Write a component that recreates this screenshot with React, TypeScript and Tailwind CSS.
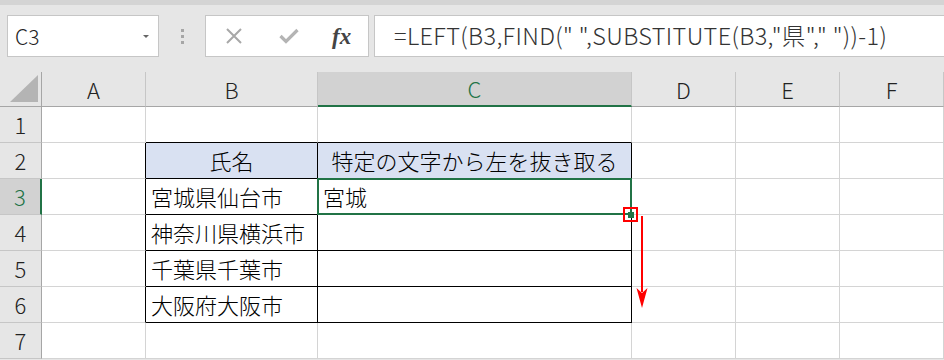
import React from 'react'

// Excel-ish sheet: formula bar on top, then a grid of 42px row headers + 6 columns.
const cols: { id: string; w: string }[] = [
  { id: 'A', w: '104px' },
  { id: 'B', w: '172px' },
  { id: 'C', w: '314px' },
  { id: 'D', w: '104px' },
  { id: 'E', w: '104px' },
  { id: 'F', w: '104px' },
]

const rows = [1, 2, 3, 4, 5, 6, 7]

const data: Record<string, { text: string; center?: boolean }> = {
  B2: { text: '氏名', center: true },
  C2: { text: '特定の文字から左を抜き取る', center: true },
  B3: { text: '宮城県仙台市' },
  B4: { text: '神奈川県横浜市' },
  B5: { text: '千葉県千葉市' },
  B6: { text: '大阪府大阪市' },
  C3: { text: '宮城' },
}

const inTable = (c: string, r: number) => (c === 'B' || c === 'C') && r >= 2 && r <= 6

function cellBorder(c: string, r: number) {
  if (inTable(c, r)) return 'border-r border-b border-r-black border-b-black'
  if (c === 'A' && r >= 2 && r <= 6) return 'border-r border-b border-r-black border-b-[#d4d4d4]'
  if ((c === 'B' || c === 'C') && r === 1) return 'border-r border-b border-r-[#d4d4d4] border-b-black'
  return 'border-r border-b border-[#d4d4d4]'
}

function FormulaBar() {
  return (
    <div className="flex items-start h-[42px] mt-[10px] pl-[7px]">
      {/* name box */}
      <div className="w-[152px] h-[42px] bg-white border border-[#c6c6c6] flex items-center justify-between pl-[7px] pr-[9px]">
        <span className="text-[21px] font-light text-[#222] leading-none">C3</span>
        <span className="w-0 h-0 border-l-[3px] border-r-[3px] border-t-[3px] border-l-transparent border-r-transparent border-t-[#666]" />
      </div>
      {/* grip dots */}
      <div className="w-[46px] h-[42px] flex flex-col items-center justify-center gap-[3px]">
        <span className="w-[3px] h-[3px] bg-[#a6a6a6]" />
        <span className="w-[3px] h-[3px] bg-[#a6a6a6]" />
        <span className="w-[3px] h-[3px] bg-[#a6a6a6]" />
      </div>
      {/* cancel / enter / fx */}
      <div className="w-[164px] h-[42px] bg-white border border-[#c6c6c6] flex items-center">
        <svg width="18" height="18" viewBox="0 0 18 18" className="ml-[19px]">
          <path d="M2 2 L16 16 M16 2 L2 16" stroke="#a8a8a8" strokeWidth="2" fill="none" />
        </svg>
        <svg width="20" height="16" viewBox="0 0 20 16" className="ml-[36px]">
          <path d="M1.5 8 L7 13.5 L18.5 2" stroke="#b4b4b4" strokeWidth="3.2" fill="none" />
        </svg>
        <span className="ml-[33px] font-['Liberation_Serif',serif] italic font-bold text-[23px] text-[#444] leading-none">fx</span>
      </div>
      {/* formula */}
      <div className="flex-1 ml-[5px] h-[42px] bg-white border border-r-0 border-[#c6c6c6] flex items-center pl-[19px]">
        <span className="text-[23.5px] font-light text-[#333] leading-none whitespace-nowrap tracking-[0.35px]">
          =LEFT(B3,FIND(" ",SUBSTITUTE(B3,"県"," "))-1)
        </span>
      </div>
    </div>
  )
}

function Sheet() {
  return (
    <div className="relative mt-[15px] grid grid-cols-[42px_104px_172px_314px_104px_104px_104px] grid-rows-[35px_repeat(7,36px)] bg-white font-light">
      {/* corner */}
      <div className="bg-[#e6e6e6] border-r border-b border-[#a6a6a6] flex items-end justify-end pr-[3px] pb-[4px]">
        <span className="w-[28px] h-[27px] bg-[#b4b4b4] [clip-path:polygon(100%_0,100%_100%,0_100%)]" />
      </div>
      {cols.map(({ id }) =>
        id === 'C' ? (
          <div key={id} className="bg-[#d2d2d2] border-b-2 border-b-[#217346] border-r border-r-[#c6c6c6] flex items-center justify-center text-[22px] text-[#217346]">
            {id}
          </div>
        ) : (
          <div key={id} className="bg-[#e6e6e6] border-b border-b-[#a6a6a6] border-r border-r-[#c6c6c6] flex items-center justify-center text-[22px] text-[#222]">
            {id}
          </div>
        )
      )}
      {rows.map((r) => (
        <React.Fragment key={r}>
          {r === 3 ? (
            <div className="bg-[#d2d2d2] border-r-2 border-r-[#217346] border-b border-b-[#c6c6c6] flex items-center justify-center text-[22px] text-[#217346]">
              {r}
            </div>
          ) : (
            <div className="bg-[#e6e6e6] border-r border-r-[#a6a6a6] border-b border-b-[#c6c6c6] flex items-center justify-center text-[22px] text-[#222]">
              {r}
            </div>
          )}
          {cols.map(({ id }) => {
            const key = `${id}${r}`
            const d = data[key]
            const head = r === 2 && inTable(id, r)
            return (
              <div
                key={key}
                className={`relative flex items-center text-[22px] text-black whitespace-nowrap ${cellBorder(id, r)} ${head ? 'bg-[#d9e1f2]' : ''} ${d?.center ? 'justify-center' : 'pl-[5px]'}`}
              >
                {d?.text}
                {key === 'C3' && <div className="absolute -top-px -left-px -right-px -bottom-px border-2 border-[#217346]" />}
              </div>
            )
          })}
        </React.Fragment>
      ))}

      {/* fill handle, highlighted in red */}
      <div className="absolute left-[623px] top-[135px] w-[15px] h-[15px] border-2 border-[#ff0000] flex items-center justify-center">
        <span className="w-[6px] h-[6px] bg-[#217346]" />
      </div>
      {/* drag arrow */}
      <svg className="absolute left-[636px] top-[144px]" width="13" height="94" viewBox="0 0 13 94">
        <path d="M6 0 V76" stroke="#ff0000" strokeWidth="2" />
        <polygon points="0.5,72 6,77 11.5,72 6,92" fill="#ff0000" />
      </svg>
    </div>
  )
}

export default function App() {
  return (
    <div className="w-[944px] h-[360px] overflow-hidden bg-[#e6e6e6] font-['Noto_Sans_CJK_JP',sans-serif]">
      <div className="h-[5px] bg-[#d4d4d4]" />
      <FormulaBar />
      <Sheet />
    </div>
  )
}
